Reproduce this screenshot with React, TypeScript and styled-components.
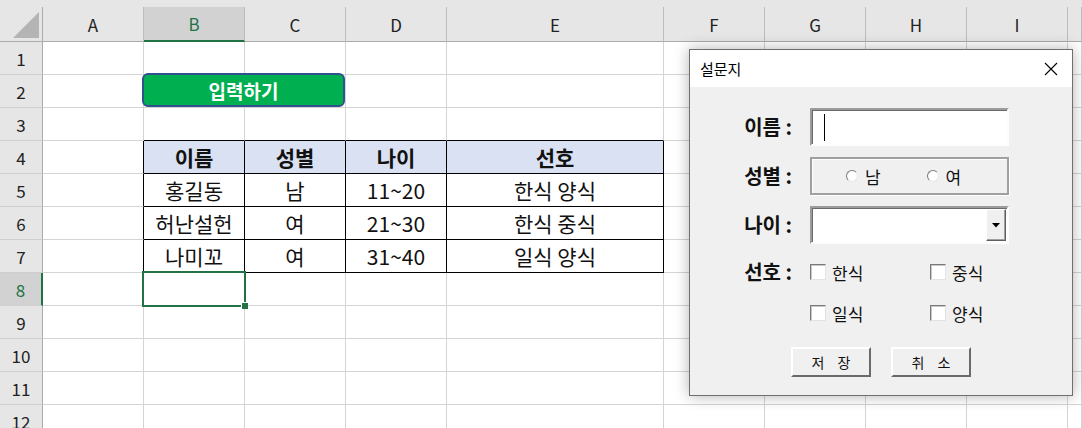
import React from 'react';
import styled, { createGlobalStyle } from 'styled-components';

const GlobalStyle = createGlobalStyle`
  html, body {
    margin: 0;
    padding: 0;
    background: #fff;
    overflow: hidden;
  }
  body {
    font-family: "Noto Sans CJK KR", "Noto Sans", sans-serif;
  }
`;

const colWidths = [43, 101, 101, 101, 101, 217, 101, 101, 101, 101, 14];
const letters = ['A', 'B', 'C', 'D', 'E', 'F', 'G', 'H', 'I', ''];
const ROWS = 12;
const SEL_COL = 1;
const SEL_ROW = 8;

const tableData: Record<number, string[]> = {
  4: ['이름', '성별', '나이', '선호'],
  5: ['홍길동', '남', '11~20', '한식 양식'],
  6: ['허난설헌', '여', '21~30', '한식 중식'],
  7: ['나미꼬', '여', '31~40', '일식 양식'],
};

const Sheet = styled.div`
  position: relative;
  width: 1082px;
  height: 428px;
  overflow: hidden;
  background: #e6e6e6;
`;

const Grid = styled.div`
  display: grid;
  grid-template-columns: ${colWidths.map((w) => `${w}px`).join(' ')};
  grid-template-rows: 35px;
  grid-auto-rows: 33px;
  padding-top: 7px;
`;

const Corner = styled.div`
  box-sizing: border-box;
  border-right: 1px solid #ababab;
  border-bottom: 1px solid #ababab;
  display: flex;
  align-items: flex-end;
  justify-content: flex-end;
  padding: 3px;

  span {
    width: 26px;
    height: 26px;
    background: #b4b4b4;
    clip-path: polygon(100% 0, 100% 100%, 0 100%);
  }
`;

const ColHead = styled.div<{ $sel?: boolean }>`
  box-sizing: border-box;
  display: flex;
  align-items: center;
  justify-content: center;
  font-size: 17px;
  color: ${(p) => (p.$sel ? '#217346' : '#222')};
  background: ${(p) => (p.$sel ? '#d2d2d2' : '#e6e6e6')};
  border-right: 1px solid #bdbdbd;
  border-bottom: ${(p) => (p.$sel ? '2px solid #217346' : '1px solid #ababab')};
`;

const RowHead = styled.div<{ $sel?: boolean }>`
  box-sizing: border-box;
  display: flex;
  align-items: center;
  justify-content: center;
  font-size: 17px;
  color: ${(p) => (p.$sel ? '#217346' : '#222')};
  background: ${(p) => (p.$sel ? '#d2d2d2' : '#e6e6e6')};
  border-right: ${(p) => (p.$sel ? '2px solid #217346' : '1px solid #ababab')};
  border-bottom: 1px solid #cfcfcf;
`;

const Cell = styled.div<{ $right: string; $bottom: string; $head?: boolean; $sel?: boolean }>`
  position: relative;
  box-sizing: border-box;
  display: flex;
  align-items: center;
  justify-content: center;
  font-size: 21px;
  font-weight: ${(p) => (p.$head ? 700 : 400)};
  color: #111;
  background: ${(p) => (p.$head ? '#d9e1f2' : '#fff')};
  border-right: 1px solid ${(p) => p.$right};
  border-bottom: 1px solid ${(p) => p.$bottom};
  white-space: nowrap;

  ${(p) =>
    p.$sel &&
    `
    &::after {
      content: '';
      position: absolute;
      left: -2px;
      top: -2px;
      right: -2px;
      bottom: -2px;
      border: 2px solid #217346;
      z-index: 2;
    }
    &::before {
      content: '';
      position: absolute;
      right: -4px;
      bottom: -4px;
      width: 6px;
      height: 6px;
      background: #217346;
      border-left: 1px solid #fff;
      border-top: 1px solid #fff;
      z-index: 3;
    }
  `}
`;

const ShapeButton = styled.div`
  position: absolute;
  left: 142px;
  top: 73px;
  width: 203px;
  height: 34px;
  box-sizing: border-box;
  background: #00b050;
  border: 2px solid #2f528f;
  border-radius: 6px;
  color: #fff;
  font-size: 19px;
  font-weight: 700;
  display: flex;
  align-items: center;
  justify-content: center;
`;

/* ---- dialog ---- */

const Dialog = styled.div`
  position: absolute;
  left: 689px;
  top: 49px;
  width: 384px;
  height: 347px;
  box-sizing: border-box;
  border: 1px solid #6f6f6f;
  background: #f0f0f0;
  box-shadow: 0 0 14px rgba(0, 0, 0, 0.3);
  display: flex;
  flex-direction: column;
`;

const TitleBar = styled.div`
  height: 37px;
  background: #fff;
  display: flex;
  align-items: center;
  justify-content: space-between;
  padding: 0 14px 0 10px;
`;

const Title = styled.span`
  font-size: 15px;
  color: #000;
`;

const DialogBody = styled.div`
  display: flex;
  flex-direction: column;
  padding-top: 21px;
`;

const Form = styled.div`
  display: grid;
  grid-template-columns: 102px 199px;
  grid-template-rows: 38px 38px 38px auto;
  column-gap: 18px;
  row-gap: 11px;
`;

const Label = styled.div<{ $top?: boolean }>`
  font-size: 20px;
  font-weight: 700;
  color: #111;
  text-align: right;
  align-self: ${(p) => (p.$top ? 'start' : 'center')};
  line-height: 20px;
  margin-top: ${(p) => (p.$top ? '7px' : '0')};
`;

const Sunken = styled.div`
  box-sizing: border-box;
  border: 2px solid;
  border-color: #9c9c9c #fdfdfd #fdfdfd #9c9c9c;
  box-shadow: inset 1px 1px 0 #6a6a6a;
`;

const TextBox = styled(Sunken)`
  background: #fff;
  display: flex;
  align-items: center;
  padding-left: 12px;

  i {
    width: 1px;
    height: 27px;
    background: #000;
  }
`;

const Frame = styled.div`
  box-sizing: border-box;
  border: 2px solid #a0a0a0;
  box-shadow: 1px 1px 0 #fff, inset 1px 1px 0 #fff;
  display: flex;
  align-items: center;
  padding-left: 34px;
`;

const RadioItem = styled.label`
  width: 83px;
  display: flex;
  align-items: center;
  gap: 7px;
  font-size: 17px;
  color: #111;
`;

const RadioDot = styled.span`
  box-sizing: border-box;
  width: 12px;
  height: 12px;
  border-radius: 50%;
  border: 1px solid;
  border-color: #7a7a7a #e6e6e6 #e6e6e6 #7a7a7a;
  background: #fff;
`;

const Combo = styled(Sunken)`
  background: #fff;
  display: flex;
  justify-content: flex-end;
  padding: 1px;
`;

const DropButton = styled.div`
  box-sizing: border-box;
  width: 20px;
  background: #f0f0f0;
  border: 1px solid;
  border-color: #fff #5f5f5f #5f5f5f #fff;
  box-shadow: inset -1px -1px 0 #a0a0a0;
  display: flex;
  align-items: center;
  justify-content: center;
`;

const Checks = styled.div`
  display: grid;
  grid-template-columns: 120px 1fr;
  grid-auto-rows: 20px;
  row-gap: 21px;
  margin-top: 7px;
`;

const CheckItem = styled.label`
  display: flex;
  align-items: center;
  gap: 6px;
  font-size: 17px;
  color: #111;
`;

const CheckBox = styled.span`
  box-sizing: border-box;
  width: 16px;
  height: 16px;
  border: 1px solid;
  border-color: #7a7a7a #e3e3e3 #e3e3e3 #7a7a7a;
  box-shadow: inset 1px 1px 0 #c8c8c8;
  background: #fff;
`;

const ButtonRow = styled.div`
  display: flex;
  justify-content: center;
  gap: 20px;
  margin-top: 24px;
`;

const PushButton = styled.div`
  box-sizing: border-box;
  width: 80px;
  height: 30px;
  background: #f0f0f0;
  border: 2px solid;
  border-color: #fff #6a6a6a #6a6a6a #fff;
  display: flex;
  align-items: center;
  justify-content: center;
  font-size: 14px;
  color: #111;
  letter-spacing: 5px;
  padding-left: 5px;
  white-space: pre;
`;

function cellBorders(r: number, c: number) {
  const inTableRow = r >= 4 && r <= 7;
  const right = inTableRow && c >= 0 && c <= 4 ? '#000' : '#d4d4d4';
  const bottom = c >= 1 && c <= 4 && r >= 3 && r <= 7 ? '#000' : '#d4d4d4';
  return { right, bottom };
}

const App = () => {
  const rows = Array.from({ length: ROWS }, (_, i) => i + 1);

  return (
    <>
      <GlobalStyle />
      <Sheet>
        <Grid>
          <Corner>
            <span />
          </Corner>
          {letters.map((l, i) => (
            <ColHead key={i} $sel={i === SEL_COL}>
              {l}
            </ColHead>
          ))}
          {rows.map((r) => (
            <React.Fragment key={r}>
              <RowHead $sel={r === SEL_ROW}>{r}</RowHead>
              {letters.map((_, c) => {
                const { right, bottom } = cellBorders(r, c);
                const data = tableData[r];
                const text = data && c >= 1 && c <= 4 ? data[c - 1] : '';
                return (
                  <Cell
                    key={c}
                    $right={right}
                    $bottom={bottom}
                    $head={r === 4 && c >= 1 && c <= 4}
                    $sel={r === SEL_ROW && c === SEL_COL}
                  >
                    {text}
                  </Cell>
                );
              })}
            </React.Fragment>
          ))}
        </Grid>

        <ShapeButton>입력하기</ShapeButton>

        <Dialog>
          <TitleBar>
            <Title>설문지</Title>
            <svg width="14" height="14" viewBox="0 0 14 14">
              <path d="M1 1 L13 13 M13 1 L1 13" stroke="#000" strokeWidth="1.1" fill="none" />
            </svg>
          </TitleBar>
          <DialogBody>
            <Form>
              <Label>이름 :</Label>
              <TextBox>
                <i />
              </TextBox>

              <Label>성별 :</Label>
              <Frame>
                <RadioItem>
                  <RadioDot />남
                </RadioItem>
                <RadioItem>
                  <RadioDot />여
                </RadioItem>
              </Frame>

              <Label>나이 :</Label>
              <Combo>
                <DropButton>
                  <svg width="8" height="5" viewBox="0 0 8 5">
                    <path d="M0 0 H8 L4 4.5 Z" fill="#000" />
                  </svg>
                </DropButton>
              </Combo>

              <Label $top>선호 :</Label>
              <Checks>
                <CheckItem>
                  <CheckBox />한식
                </CheckItem>
                <CheckItem>
                  <CheckBox />중식
                </CheckItem>
                <CheckItem>
                  <CheckBox />일식
                </CheckItem>
                <CheckItem>
                  <CheckBox />양식
                </CheckItem>
              </Checks>
            </Form>
            <ButtonRow>
              <PushButton>저 장</PushButton>
              <PushButton>취 소</PushButton>
            </ButtonRow>
          </DialogBody>
        </Dialog>
      </Sheet>
    </>
  );
};

export default App;
